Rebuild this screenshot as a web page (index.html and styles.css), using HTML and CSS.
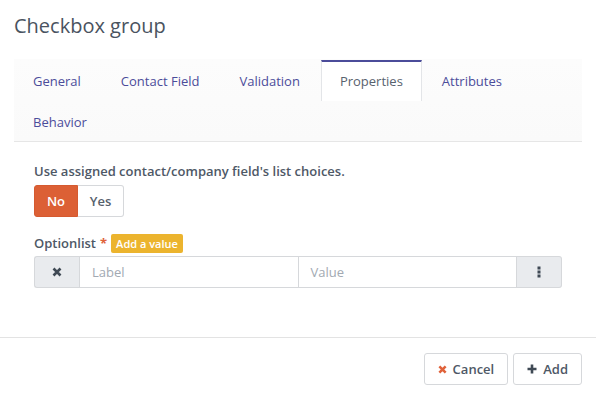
FILE: index.html
```html
<!DOCTYPE html>
<html>
<head>
<meta charset="utf-8">
<link rel="stylesheet" href="styles.css">
</head>
<body>
<div class="modal">
  <div class="modal-header">
    <h4 class="title">Checkbox group</h4>
  </div>
  <div class="tabs">
    <a class="tab first">General</a>
    <a class="tab">Contact Field</a>
    <a class="tab">Validation</a>
    <a class="tab active">Properties</a>
    <a class="tab">Attributes</a>
    <a class="tab first">Behavior</a>
  </div>
  <div class="content">
    <label class="field-label">Use assigned contact/company field's list choices.</label>
    <div class="toggle">
      <span class="tbtn on">No</span>
      <span class="tbtn">Yes</span>
    </div>
    <div class="opt-label">
      <span class="field-label">Optionlist</span>
      <span class="req">*</span>
      <span class="badge">Add a value</span>
    </div>
    <div class="input-group">
      <span class="addon addon-left">
        <svg width="10" height="10" viewBox="0 0 10 10"><path d="M1.5 1.5 L8.5 8.5 M8.5 1.5 L1.5 8.5" stroke="#3f4954" stroke-width="2.6" stroke-linecap="butt"/></svg>
      </span>
      <span class="inp">Label</span>
      <span class="inp">Value</span>
      <span class="addon addon-right">
        <svg width="4" height="12" viewBox="0 0 4 12"><rect x="0.5" y="0.5" width="3" height="3" fill="#3f4954"/><rect x="0.5" y="4.5" width="3" height="3" fill="#3f4954"/><rect x="0.5" y="8.5" width="3" height="3" fill="#3f4954"/></svg>
      </span>
    </div>
  </div>
  <div class="footer">
    <span class="btn">
      <svg width="9" height="9" viewBox="0 0 10 10"><path d="M1.5 1.5 L8.5 8.5 M8.5 1.5 L1.5 8.5" stroke="#e0623a" stroke-width="2.8"/></svg>
      Cancel
    </span>
    <span class="btn">
      <svg width="10" height="10" viewBox="0 0 10 10"><path d="M5 0.5 V9.5 M0.5 5 H9.5" stroke="#3f4954" stroke-width="2.6"/></svg>
      Add
    </span>
  </div>
</div>
</body>
</html>
```
FILE: styles.css
```css
* { box-sizing: border-box; }
html, body { margin: 0; padding: 0; background: #fff; }
body {
  font-family: "Open Sans", "Noto Sans", sans-serif;
  font-size: 13px;
  color: #4e5866;
  width: 596px;
  height: 400px;
  overflow: hidden;
}
.modal-header { padding: 13px 14px 0; height: 59px; }
.title {
  margin: 0;
  font-size: 20px;
  font-weight: 400;
  line-height: 26px;
  color: #4a5360;
}
.tabs {
  margin: 0 14px;
  padding-top: 1px;
  display: flex;
  flex-wrap: wrap;
  background: linear-gradient(#fcfcfc, #fafafa);
  border-bottom: 1px solid #e6e6e6;
  height: 83px;
}
.tab {
  display: block;
  height: 41px;
  line-height: 40px;
  padding: 0 19px;
  border: 1px solid transparent;
  border-bottom: none;
  color: #4b4c9a;
  font-size: 13px;
}
.tab.first { padding-left: 18px; }
.tab.active {
  background: #fff;
  border-color: #e3e5e8;
  border-top: 2px solid #4b4c9a;
  line-height: 38px;
  color: #58626e;
  margin-left: 1px;
  padding: 0 18px;
}
.content { padding: 20px 34px 0; }
.field-label {
  display: block;
  font-weight: 600;
  font-size: 13px;
  line-height: 18px;
  color: #4e5866;
}
.toggle {
  display: flex;
  margin-top: 5px;
  width: 90px;
  height: 32px;
}
.tbtn {
  flex: 0 0 auto;
  display: flex;
  align-items: center;
  justify-content: center;
  font-weight: 600;
  color: #56606c;
  border: 1px solid #d6d8db;
  border-left: none;
  border-radius: 0 3px 3px 0;
  width: 46px;
}
.tbtn.on {
  width: 44px;
  background: #dc6035;
  border: 1px solid #d55a30;
  color: #fff;
  border-radius: 3px 0 0 3px;
}
.opt-label {
  display: flex;
  align-items: center;
  margin-top: 16px;
  height: 20px;
}
.opt-label .field-label { display: inline; }
.req { color: #e0623a; font-weight: 700; margin-left: 4px; }
.badge {
  margin-left: 4px;
  background: #ecb42e;
  color: #fff;
  font-weight: 600;
  font-size: 11px;
  line-height: 19px;
  height: 19px;
  padding: 0 5px;
  border-radius: 2px;
}
.input-group {
  display: flex;
  margin-top: 3px;
  height: 32px;
}
.addon {
  flex: 0 0 45px;
  display: flex;
  align-items: center;
  justify-content: center;
  background: #e9ebee;
  border: 1px solid #d6d8db;
}
.addon-left { border-radius: 3px 0 0 3px; border-right: none; }
.addon-right { border-radius: 0 3px 3px 0; border-left: none; }
.inp {
  flex: 1 1 0;
  border: 1px solid #d6d8db;
  padding: 0 12px;
  line-height: 30px;
  color: #a2a9b2;
}
.inp + .inp { border-left: none; }
.footer {
  margin-top: 49px;
  border-top: 1px solid #e3e3e3;
  padding: 15px 14px 0;
  display: flex;
  justify-content: flex-end;
  gap: 5px;
}
.btn {
  display: flex;
  align-items: center;
  gap: 6px;
  height: 32px;
  padding: 0 13px;
  border: 1px solid #d6d8db;
  border-radius: 3px;
  font-weight: 600;
  color: #4e5866;
}
```
